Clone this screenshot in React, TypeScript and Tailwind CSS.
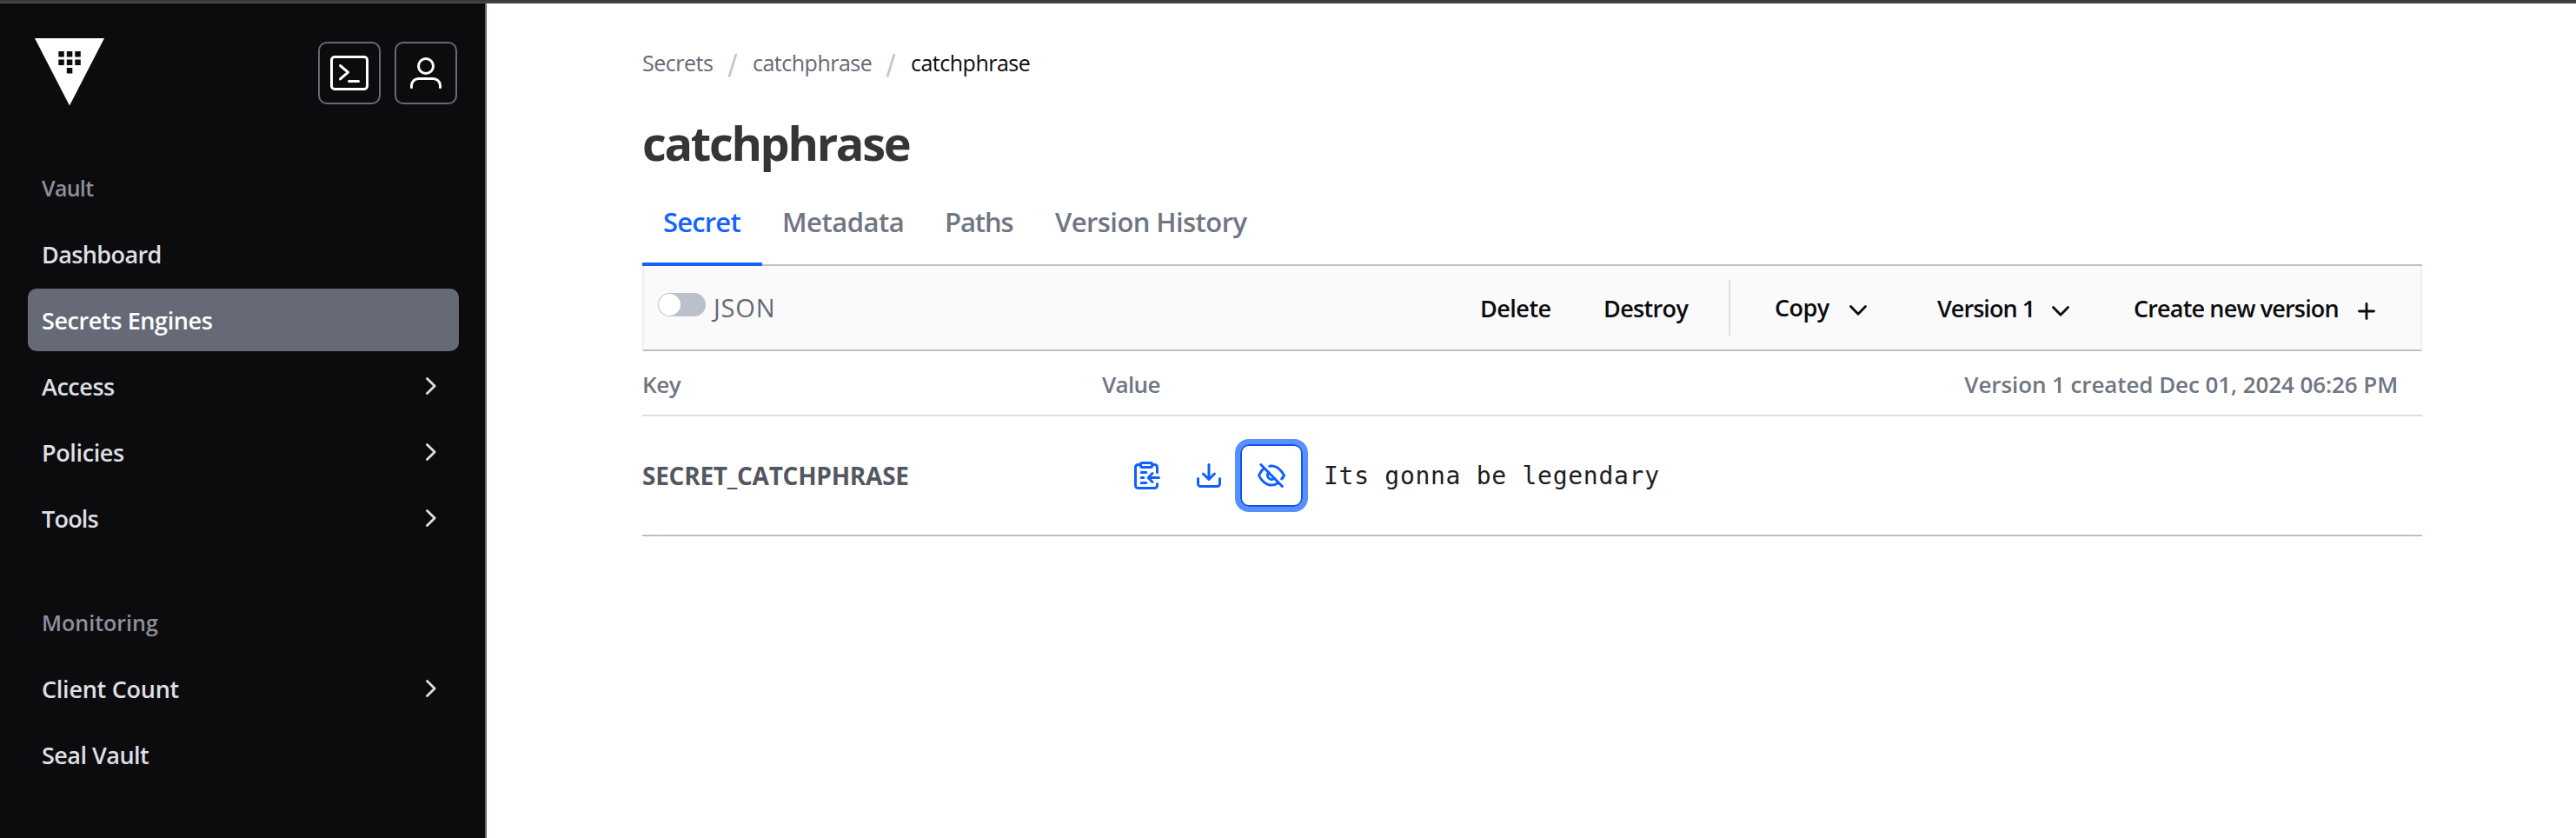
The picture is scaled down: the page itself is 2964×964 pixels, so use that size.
import type { ReactNode } from "react";

type NavItem = { label: string; tracking: string; active?: boolean; expandable?: boolean };

const vaultItems: NavItem[] = [
  { label: "Dashboard", tracking: "tracking-[-0.6px]" },
  { label: "Secrets Engines", tracking: "tracking-[-0.4px]", active: true },
  { label: "Access", tracking: "tracking-[-0.45px]", expandable: true },
  { label: "Policies", tracking: "tracking-[-0.37px]", expandable: true },
  { label: "Tools", tracking: "tracking-[-0.8px]", expandable: true },
];

const monitoringItems: NavItem[] = [
  { label: "Client Count", tracking: "tracking-[-0.26px]", expandable: true },
  { label: "Seal Vault", tracking: "tracking-[-0.52px]" },
];

const stroke = {
  fill: "none",
  stroke: "currentColor",
  strokeLinecap: "round" as const,
  strokeLinejoin: "round" as const,
};

function VaultLogo() {
  const dots = [
    [27.3, 15],
    [36.8, 15],
    [46.3, 15],
    [27.3, 24.5],
    [36.8, 24.5],
    [46.3, 24.5],
    [36.8, 34],
  ];
  return (
    <svg width="80" height="78" viewBox="0 0 80 78" aria-label="Vault">
      <path d="M0 0h80L40 77.5z" fill="#fff" />
      {dots.map(([x, y]) => (
        <rect key={`${x}-${y}`} x={x} y={y} width="6.5" height="6.5" fill="#0c0c0e" />
      ))}
    </svg>
  );
}

function TerminalIcon() {
  return (
    <svg width="48" height="48" viewBox="0 0 24 24" strokeWidth="1.5" {...stroke}>
      <rect x="1.75" y="2.75" width="20.5" height="18.5" rx="1.75" />
      <path d="M6.75 7.75l4.5 3.85-4.5 3.85M11.75 16.75h5.5" />
    </svg>
  );
}

function UserIcon() {
  return (
    <svg width="48" height="48" viewBox="0 0 24 24" strokeWidth="1.5" {...stroke}>
      <circle cx="12" cy="8" r="4.25" />
      <path d="M3.75 20.25v-1a4 4 0 014-4h8.5a4 4 0 014 4v1" />
    </svg>
  );
}

function ChevronRight() {
  return (
    <svg width="12" height="20" viewBox="0 0 12 20" strokeWidth="2.8" {...stroke}>
      <path d="M1.5 1.5l8.6 8.5-8.6 8.5" />
    </svg>
  );
}

function ChevronDown() {
  return (
    <svg className="shrink-0" width="20" height="12" viewBox="0 0 20 12" strokeWidth="2.8" {...stroke}>
      <path d="M1.5 1.5l8.5 8.8 8.5-8.8" />
    </svg>
  );
}

function PlusIcon() {
  return (
    <svg className="shrink-0" width="20" height="20" viewBox="0 0 20 20" strokeWidth="2.8" {...stroke}>
      <path d="M10 1.5v17M1.5 10h17" />
    </svg>
  );
}

function ClipboardCopyIcon() {
  return (
    <svg width="32" height="32" viewBox="0 0 16 16" strokeWidth="1.5" {...stroke}>
      <rect x="4.75" y="0.75" width="6.5" height="2.5" rx="0.75" />
      <path d="M4.75 1.75h-1.5a1.5 1.5 0 00-1.5 1.5v10.5a1.5 1.5 0 001.5 1.5h9.5a1.5 1.5 0 001.5-1.5v-1M11.25 1.75h1.5a1.5 1.5 0 011.5 1.5v3" />
      <path d="M15.25 9.25H9.25M11.5 6.75l-2.4 2.5 2.4 2.5M5.1 6.2h2.8M5.1 9.25h1.3M5.1 12.2h2.8" />
    </svg>
  );
}

function DownloadIcon() {
  return (
    <svg width="32" height="32" viewBox="0 0 16 16" strokeWidth="1.5" {...stroke}>
      <path d="M8 1.75v8.5M4.75 7L8 10.25 11.25 7" />
      <path d="M1.75 9.75v3a1.5 1.5 0 001.5 1.5h9.5a1.5 1.5 0 001.5-1.5v-3" />
    </svg>
  );
}

function EyeOffIcon() {
  return (
    <svg width="32" height="32" viewBox="0 0 16 16" strokeWidth="1.5" {...stroke}>
      <path d="M1.9 1.75l12.3 12.5" />
      <path d="M6.9 2.6Q7.4 2.5 8 2.5c4.75 0 7.25 5.5 7.25 5.5s-.5 1-1.4 2" />
      <path d="M3.6 4C1.7 5.4.75 8 .75 8S3.25 13.5 8 13.5c1.3 0 2.5-.4 3.5-1.05" />
      <path d="M6.3 6.2a2.45 2.45 0 003.4 3.5" />
    </svg>
  );
}

function NavRow({ item }: { item: NavItem }) {
  return (
    <li
      className={`flex h-[72px] items-center justify-between rounded-[10px] pl-4 pr-[26px] ${
        item.active ? "bg-[#656a76] text-white" : "text-[#dedfe3]"
      }`}
    >
      <span className={`pt-[3px] ${item.tracking}`}>{item.label}</span>
      {item.expandable && <ChevronRight />}
    </li>
  );
}

function NavHeading({ children, className }: { children: ReactNode; className: string }) {
  return (
    <h2 className={`flex h-[72px] items-center pl-4 pt-[2px] text-[25px] text-[#8c909c] ${className}`}>{children}</h2>
  );
}

function Sidebar() {
  return (
    <aside className="h-full w-[560px] shrink-0 border-r-2 border-[#656a76] bg-[#0c0c0e] pr-[30px] pl-8">
      <header className="flex justify-between pl-2 pr-0.5 pt-10">
        <VaultLogo />
        <div className="mt-1 flex gap-4 text-white">
          <button className="flex size-[72px] items-center justify-center rounded-[10px] border-2 border-[#656a76]">
            <TerminalIcon />
          </button>
          <button className="flex size-[72px] items-center justify-center rounded-[10px] border-2 border-[#656a76]">
            <UserIcon />
          </button>
        </div>
      </header>
      <nav className="mt-[58px] text-[27px] font-semibold">
        <NavHeading className="tracking-[-0.7px]">Vault</NavHeading>
        <ul className="mt-1 flex flex-col gap-1">
          {vaultItems.map((item) => (
            <NavRow key={item.label} item={item} />
          ))}
        </ul>
        <NavHeading className="mt-12">Monitoring</NavHeading>
        <ul className="mt-1 flex flex-col gap-1">
          {monitoringItems.map((item) => (
            <NavRow key={item.label} item={item} />
          ))}
        </ul>
      </nav>
    </aside>
  );
}

function Slash() {
  return (
    <span className="w-[46px] pt-[2px] text-center font-['DejaVu_Sans',sans-serif] text-[32px] tracking-normal text-[#c2c5cb]">
      /
    </span>
  );
}

function Breadcrumb() {
  return (
    <nav className="flex h-10 items-center text-[25px] tracking-[-0.5px] text-[#656a76]">
      <a className="w-[81px]">Secrets</a>
      <Slash />
      <a className="w-[136px]">catchphrase</a>
      <Slash />
      <span className="text-[#0c0c0e]">catchphrase</span>
    </nav>
  );
}

function Tabs() {
  return (
    <div className="flex h-[90px] text-[31px] font-semibold text-[#6f7682] shadow-[inset_0_-2px_0_#bac1cc]">
      <div className="w-[138px] border-b-4 border-[#1563ff] pl-6 pt-[16px] tracking-[-0.83px] text-[#1563ff]">Secret</div>
      <div className="w-[187px] pl-[23px] pt-[16px] tracking-[-0.5px]">Metadata</div>
      <div className="w-[126px] pl-[23px] pt-[16px] tracking-[-1.1px]">Paths</div>
      <div className="pl-6 pt-[16px] tracking-[-0.58px]">Version History</div>
    </div>
  );
}

function Toolbar() {
  return (
    <div className="flex h-[98px] items-center border-x-2 border-b-2 border-x-[#ebeef2] border-b-[#bac1cc] bg-[#fafafa] pl-4 pr-[52px] text-[27px] font-semibold text-[#0c0c0e]">
      <span className="mb-[7px] flex h-[27px] w-[55px] items-center rounded-full bg-[#bac1cc] pl-px">
        <span className="size-[25px] rounded-full bg-white" />
      </span>
      <span className="ml-[9px] text-[29px] font-normal tracking-[0.8px] text-[#656a76]">JSON</span>
      <span className="ml-auto w-[142px] pt-[2px] tracking-[-0.5px]">Delete</span>
      <span className="w-[144px] pt-[2px] tracking-[-0.65px]">Destroy</span>
      <span className="h-16 w-0.5 bg-[#dedfe8]" />
      <span className="ml-[51px] w-[86px] tracking-[-0.53px]">Copy</span>
      <span className="pt-1.5">
        <ChevronDown />
      </span>
      <span className="ml-[81px] w-[132px] pt-[2px] tracking-[-0.96px]">Version 1</span>
      <span className="pt-2">
        <ChevronDown />
      </span>
      <span className="ml-[74px] w-[258px] pt-[2px] tracking-[-0.84px]">Create new version</span>
      <span className="pt-2">
        <PlusIcon />
      </span>
    </div>
  );
}

function SecretTable() {
  return (
    <section>
      <div className="flex h-[75px] items-center border-b-2 border-[#dce0e6] pr-7 pt-[3px] text-[26px] font-semibold text-[#6f7682]">
        <span className="w-[529px] tracking-[-0.44px]">Key</span>
        <span className="tracking-[-0.66px]">Value</span>
        <span className="ml-auto tracking-[-0.09px]">Version 1 created Dec 01, 2024 06:26 PM</span>
      </div>
      <div className="flex h-[138px] items-center border-b-2 border-[#bac1cc]">
        <span className="w-[544px] text-[28px] font-bold tracking-[-0.26px] text-[#535761]">SECRET_CATCHPHRASE</span>
        <div className="flex text-[#1060ff]">
          <button className="flex size-[72px] items-center justify-center">
            <ClipboardCopyIcon />
          </button>
          <button className="flex size-[72px] items-center justify-center">
            <DownloadIcon />
          </button>
          <button className="flex size-[72px] items-center justify-center rounded-[10px] border-2 border-[#0c56e9] shadow-[0_0_0_6px_#5990ff]">
            <EyeOffIcon />
          </button>
        </div>
        <code className="ml-[24px] pt-px font-['DejaVu_Sans_Mono',monospace] text-[28px] tracking-[0.72px] text-[#1c1d20]">
          Its gonna be legendary
        </code>
      </div>
    </section>
  );
}

export default function App() {
  return (
    <div className="flex h-[964px] w-[2964px] flex-col overflow-hidden bg-white font-['Open_Sans',sans-serif] whitespace-nowrap">
      <div className="h-1 shrink-0 border-t-2 border-[#3b3b3b] bg-[#474747]" />
      <div className="flex min-h-0 flex-1">
        <Sidebar />
        <main className="ml-[179px] w-[2048px] pt-[49px]">
          <Breadcrumb />
          <h1 className="mt-[31px] h-[80px] text-[54px] leading-[80px] font-bold tracking-[-2.3px] text-[#353535]">
            catchphrase
          </h1>
          <div className="mt-[12px]">
            <Tabs />
          </div>
          <Toolbar />
          <SecretTable />
        </main>
      </div>
    </div>
  );
}
